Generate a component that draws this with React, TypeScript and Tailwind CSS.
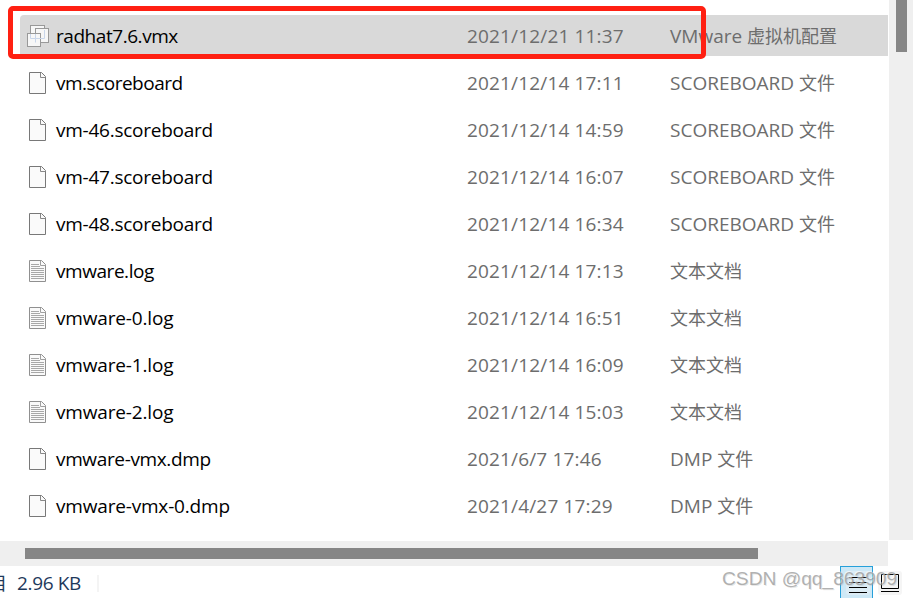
type IconKind = "vmx" | "blank" | "text"

interface FileRow {
  name: string
  date: string
  type: string
  typeLabel: string
  icon: IconKind
  nameClass: string
}

const files: FileRow[] = [
  { name: "radhat7.6.vmx", date: "2021/12/21 11:37", type: "VMware ", typeLabel: "虚拟机配置", icon: "vmx", nameClass: "tracking-[-0.45px]" },
  { name: "vm.scoreboard", date: "2021/12/14 17:11", type: "SCOREBOARD ", typeLabel: "文件", icon: "blank", nameClass: "tracking-[-0.5px]" },
  { name: "vm-46.scoreboard", date: "2021/12/14 14:59", type: "SCOREBOARD ", typeLabel: "文件", icon: "blank", nameClass: "tracking-[-0.25px]" },
  { name: "vm-47.scoreboard", date: "2021/12/14 16:07", type: "SCOREBOARD ", typeLabel: "文件", icon: "blank", nameClass: "tracking-[-0.25px]" },
  { name: "vm-48.scoreboard", date: "2021/12/14 16:34", type: "SCOREBOARD ", typeLabel: "文件", icon: "blank", nameClass: "tracking-[-0.25px]" },
  { name: "vmware.log", date: "2021/12/14 17:13", type: "", typeLabel: "文本文档", icon: "text", nameClass: "tracking-[-0.45px]" },
  { name: "vmware-0.log", date: "2021/12/14 16:51", type: "", typeLabel: "文本文档", icon: "text", nameClass: "tracking-[-0.16px]" },
  { name: "vmware-1.log", date: "2021/12/14 16:09", type: "", typeLabel: "文本文档", icon: "text", nameClass: "tracking-[-0.16px]" },
  { name: "vmware-2.log", date: "2021/12/14 15:03", type: "", typeLabel: "文本文档", icon: "text", nameClass: "tracking-[-0.16px]" },
  { name: "vmware-vmx.dmp", date: "2021/6/7 17:46", type: "DMP ", typeLabel: "文件", icon: "blank", nameClass: "tracking-[-0.36px]" },
  { name: "vmware-vmx-0.dmp", date: "2021/4/27 17:29", type: "DMP ", typeLabel: "文件", icon: "blank", nameClass: "tracking-[-0.18px]" },
]

function FileIcon({ kind }: { kind: IconKind }) {
  if (kind === "vmx") {
    return (
      <svg width="24" height="24" viewBox="0 0 24 24" fill="#f7f7f7" stroke="#999">
        <rect x="3.5" y="1.5" width="14" height="13" />
        <rect x="8.5" y="4.5" width="13" height="14" />
        <path d="M17.5 6v8.5H14" fill="none" stroke="#c9d6ea" />
        <rect x="0.5" y="9.5" width="13" height="13" />
        <path d="M8.5 10v4.5H14M3.5 10v4.5h5v4" fill="none" stroke="#c9d6ea" />
      </svg>
    )
  }

  return (
    <svg width="24" height="24" viewBox="0 0 24 24" fill="none">
      <path
        d="M2.5 1.5h12l4 4v17h-16z"
        fill="#fafafa"
        stroke={kind === "text" ? "#909090" : "#787878"}
      />
      <path d="M13.5 2v4.5h5" stroke={kind === "text" ? "#a0a0a0" : "#888"} />
      {kind === "text" && (
        <path
          d="M4 5.5h8M4 7.5h9M4 9.5h13M4 11.5h13M4 13.5h13M4 15.5h13M4 17.5h13M4 19.5h13"
          stroke="#a8a8a8"
        />
      )}
    </svg>
  )
}

export default function App() {
  return (
    <div className="relative flex h-[598px] w-[913px] flex-col overflow-hidden bg-white font-['Open_Sans','Noto_Sans_CJK_SC',sans-serif] text-[19px] whitespace-nowrap">
      <div className="flex h-[541px] justify-between">
        <div className="flex w-[888px] flex-col gap-[6px] pt-[15px] pl-5">
          {files.map((file, i) => (
            <div
              key={file.name}
              className={`flex h-[41px] shrink-0 items-center leading-6 ${i === 0 ? "rounded-tl-sm bg-[#d9d9d9]" : ""}`}
            >
              <div className="w-9 pt-px pl-[7px]">
                <FileIcon kind={file.icon} />
              </div>
              <span className={`w-[411px] text-black ${file.nameClass}`}>{file.name}</span>
              <span className="w-[203px] tracking-[0.16px] text-[#6d6d6d]">{file.date}</span>
              <span className="whitespace-pre text-[#6d6d6d]">
                {file.type}
                <span className="font-['Noto_Sans_CJK_SC',sans-serif] text-[18px]">{file.typeLabel}</span>
              </span>
            </div>
          ))}
        </div>
        <div className="h-[540px] w-6 bg-[#efefef] pl-[7px]">
          <div className="h-[52px] w-[11px] bg-[#868686]" />
        </div>
      </div>

      <div className="h-[25px] w-[888px] shrink-0 bg-[#efefef] pt-[7px] pl-[25px]">
        <div className="h-[11px] w-[733px] bg-[#868686]" />
      </div>

      <div className="flex h-8 shrink-0 text-[#1e395b]">
        <div className="flex h-8 w-[97px] items-center pt-[3px]">
          <span className="-ml-[11px] w-7 text-[18px]">目</span>
          <span className="tracking-[-0.35px]">2.96 KB</span>
        </div>
        <div className="mt-[9px] h-[17px] w-[2px] bg-[#f4f4f4]" />
        <div className="ml-auto flex">
          <div className="h-8 w-[33px] border border-b-0 border-[#26a0da] bg-[#cde8f6] pt-1 pl-[5px]">
            <svg width="24" height="24" fill="none">
              <rect width="24" height="24" rx="3" fill="#dcecf5" />
              <path d="M3 6.5h18M3 11.5h18M3 16.5h18M3 21.5h18" stroke="#000" />
            </svg>
          </div>
          <div className="w-10 pt-[5px] pl-[5px]">
            <svg width="24" height="24" fill="none">
              <rect width="24" height="24" rx="3" fill="#f5f5f5" />
              <path d="M3.5 3.5h17v14h-17zM3 20.5h18" stroke="#000" />
            </svg>
          </div>
        </div>
      </div>

      {/* highlight around the selected file */}
      <div className="absolute top-[6px] left-2 h-[53px] w-[698px] rounded-[5px] border-[5px] border-[#ff2012]" />
      <span className="absolute top-[567px] left-[722px] font-['Liberation_Sans',sans-serif] text-[19.2px] leading-6 text-[#999]/75 [text-shadow:-1px_-1px_0_#fff8,1px_1px_0_#8883]">
        CSDN @qq_863909
      </span>
    </div>
  )
}
